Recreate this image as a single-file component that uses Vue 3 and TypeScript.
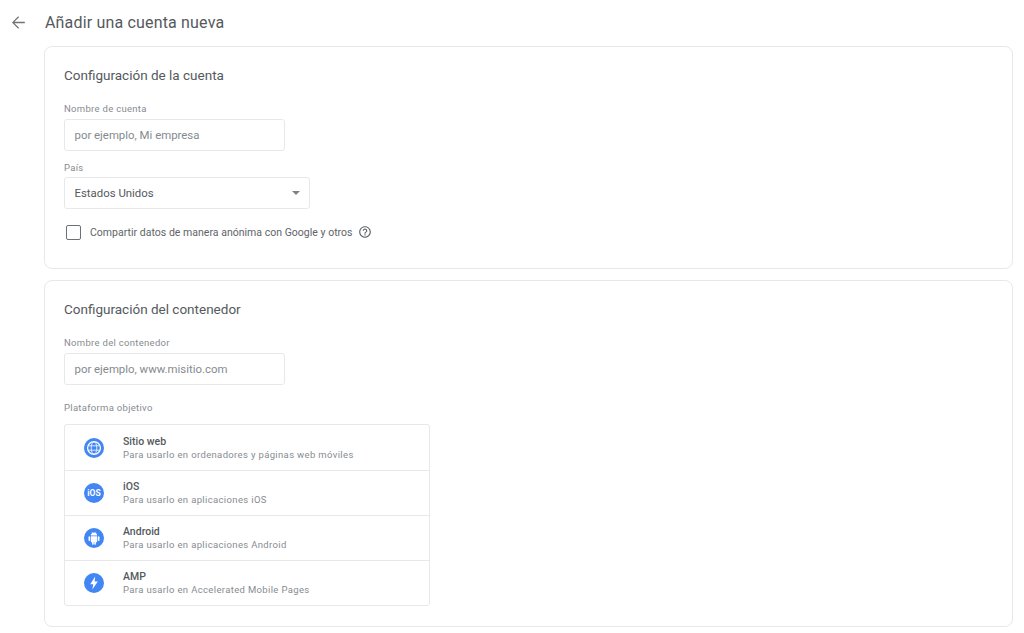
<script setup lang="ts">
const platforms = [
  { id: 'web', name: 'Sitio web', desc: 'Para usarlo en ordenadores y páginas web móviles' },
  { id: 'ios', name: 'iOS', desc: 'Para usarlo en aplicaciones iOS' },
  { id: 'android', name: 'Android', desc: 'Para usarlo en aplicaciones Android' },
  { id: 'amp', name: 'AMP', desc: 'Para usarlo en Accelerated Mobile Pages' },
]
</script>

<template>
  <div class="page">
    <header class="top">
      <svg class="back" viewBox="0 0 24 24" width="19" height="19">
        <path fill="#6f7377" d="M20 11.200H6.800l5.900-5.900L11.600 4.200 3.800 12l7.800 7.800 1.100-1.100-5.900-5.900H20z" />
      </svg>
      <h1>Añadir una cuenta nueva</h1>
    </header>

    <section class="card first">
      <h2>Configuración de la cuenta</h2>
      <label class="lbl">Nombre de cuenta</label>
      <div class="field short"><span class="ph">por ejemplo, Mi empresa</span></div>
      <label class="lbl country">País</label>
      <div class="field wide">
        <span class="val">Estados Unidos</span>
        <span class="caret"></span>
      </div>
      <div class="share">
        <span class="check"></span>
        <span class="share-text">Compartir datos de manera anónima con Google y otros</span>
        <svg class="help" viewBox="0 0 24 24" width="14" height="14">
          <path fill="#5f6368" d="M11 18h2v-2h-2v2zm1-16C6.480 2 2 6.480 2 12s4.480 10 10 10 10-4.480 10-10S17.520 2 12 2zm0 18c-4.410 0-8-3.590-8-8s3.590-8 8-8 8 3.590 8 8-3.590 8-8 8zm0-14c-2.210 0-4 1.790-4 4h2c0-1.100.9-2 2-2s2 .9 2 2c0 2-3 1.750-3 5h2c0-2.250 3-2.500 3-5 0-2.210-1.790-4-4-4z" />
        </svg>
      </div>
    </section>

    <section class="card second">
      <h2>Configuración del contenedor</h2>
      <label class="lbl">Nombre del contenedor</label>
      <div class="field short"><span class="ph">por ejemplo, www.misitio.com</span></div>
      <label class="lbl target">Plataforma objetivo</label>
      <ul class="platforms">
        <li v-for="p in platforms" :key="p.id" class="platform">
          <svg class="picon" viewBox="0 0 20 20" width="20" height="20">
            <circle cx="10" cy="10" r="10" fill="#4285f4" />
            <g v-if="p.id === 'web'" fill="none" stroke="#fff">
              <circle cx="10" cy="10" r="6.400" stroke-width="1.300" />
              <ellipse cx="10" cy="10" rx="2.800" ry="6.200" stroke-width="0.800" />
              <path d="M4.300 7.800h11.400M4.300 12.200h11.400" stroke-width="0.800" />
            </g>
            <text v-else-if="p.id === 'ios'" class="ios-mark" x="10" y="12.900" text-anchor="middle">iOS</text>
            <path
              v-else-if="p.id === 'android'"
              fill="#fff"
              d="M6.800 8.200h6.400v5.400c0 .4-.3.7-.7.7h-.6v1.800a.8.800 0 0 1-1.600 0v-1.800h-.6v1.800a.8.800 0 0 1-1.600 0v-1.800h-.6c-.4 0-.7-.3-.7-.7zM5.300 8.200c.4 0 .8.3.8.8v3.200a.8.800 0 0 1-1.600 0V9c0-.5.400-.8.800-.8zm9.400 0c.4 0 .8.3.8.8v3.200a.8.800 0 0 1-1.600 0V9c0-.5.400-.8.800-.8zM6.800 7.600c0-1.200.6-2.200 1.600-2.700l-.7-1 .3-.2.800 1a3.500 3.500 0 0 1 2.400 0l.8-1 .3.2-.7 1c1 .5 1.600 1.500 1.600 2.700z"
            />
            <path v-else fill="#fff" d="M11.200 3.400 6.200 11.200h3.100l-1 5.400 5.500-8.200h-3.200z" />
          </svg>
          <div class="ptext">
            <div class="pname">{{ p.name }}</div>
            <div class="pdesc">{{ p.desc }}</div>
          </div>
        </li>
      </ul>
    </section>
  </div>
</template>

<style>
html,
body {
  margin: 0;
  background: #fff;
  overflow: hidden;
}
</style>

<style scoped>
.page {
  width: 1024px;
  height: 633px;
  box-sizing: border-box;
  padding: 0 11px 0 9px;
  font-family: Roboto, "Noto Sans", sans-serif;
  color: #3c4043;
  overflow: hidden;
}

.top {
  display: flex;
  align-items: center;
  height: 46px;
  padding-bottom: 2px;
  box-sizing: border-box;
}

.back {
  margin-right: 17px;
}

h1 {
  margin: 0;
  font-size: 16px;
  font-weight: 400;
  color: #55595d;
  letter-spacing: 0.17px;
}

.card {
  margin-left: 35px;
  padding: 0 19px;
  border: 1px solid #e6e8ea;
  border-radius: 8px;
  box-sizing: border-box;
}

.first {
  height: 223px;
  margin-bottom: 11px;
}

.second {
  height: 347px;
}

h2 {
  margin: 0;
  padding-top: 20px;
  font-size: 13.500px;
  line-height: 17px;
  font-weight: 400;
  color: #55595d;
}

.lbl {
  display: block;
  margin-top: 19px;
  font-size: 9.500px;
  line-height: 12px;
  letter-spacing: 0.3px;
  color: #878c91;
}

.lbl.country {
  margin-top: 11px;
}

.lbl.target {
  margin-top: 17px;
}

.field {
  display: flex;
  align-items: center;
  margin-top: 4px;
  height: 32px;
  padding: 0 9.500px;
  border: 1px solid #e6e8ea;
  border-radius: 3px;
  box-sizing: border-box;
  font-size: 11.400px;
}

.short {
  width: 221px;
}

.wide {
  width: 246px;
  margin-top: 3px;
  justify-content: space-between;
}

.ph {
  color: #858a8f;
}

.val {
  color: #55595d;
}

.caret {
  width: 0;
  height: 0;
  border-left: 4.500px solid transparent;
  border-right: 4.500px solid transparent;
  border-top: 4px solid #808488;
}

.share {
  display: flex;
  align-items: center;
  margin-top: 14px;
  margin-left: 2px;
  height: 18px;
}

.check {
  width: 15px;
  height: 15px;
  border: 1.500px solid #6d7175;
  border-radius: 2px;
  box-sizing: border-box;
  margin-right: 9px;
}

.share-text {
  font-size: 10.500px;
  letter-spacing: 0.02px;
  color: #606468;
}

.help {
  margin-left: 5px;
}

.platforms {
  list-style: none;
  margin: 10px 0 0;
  padding: 0;
  width: 366px;
  border: 1px solid #e6e8ea;
  border-radius: 3px;
  box-sizing: border-box;
}

.platform {
  display: flex;
  align-items: center;
  height: 45px;
  padding-left: 19px;
  box-sizing: border-box;
}

.platform + .platform {
  border-top: 1px solid #e6e8ea;
}

.picon {
  flex: none;
  margin-right: 19px;
}

.ios-mark {
  font-size: 8.500px;
  font-weight: 700;
  fill: #fff;
}

.pname {
  font-size: 10.500px;
  line-height: 13px;
  font-weight: 500;
  color: #55595d;
}

.pdesc {
  font-size: 9.500px;
  line-height: 13px;
  letter-spacing: 0.35px;
  color: #878c91;
}
</style>
